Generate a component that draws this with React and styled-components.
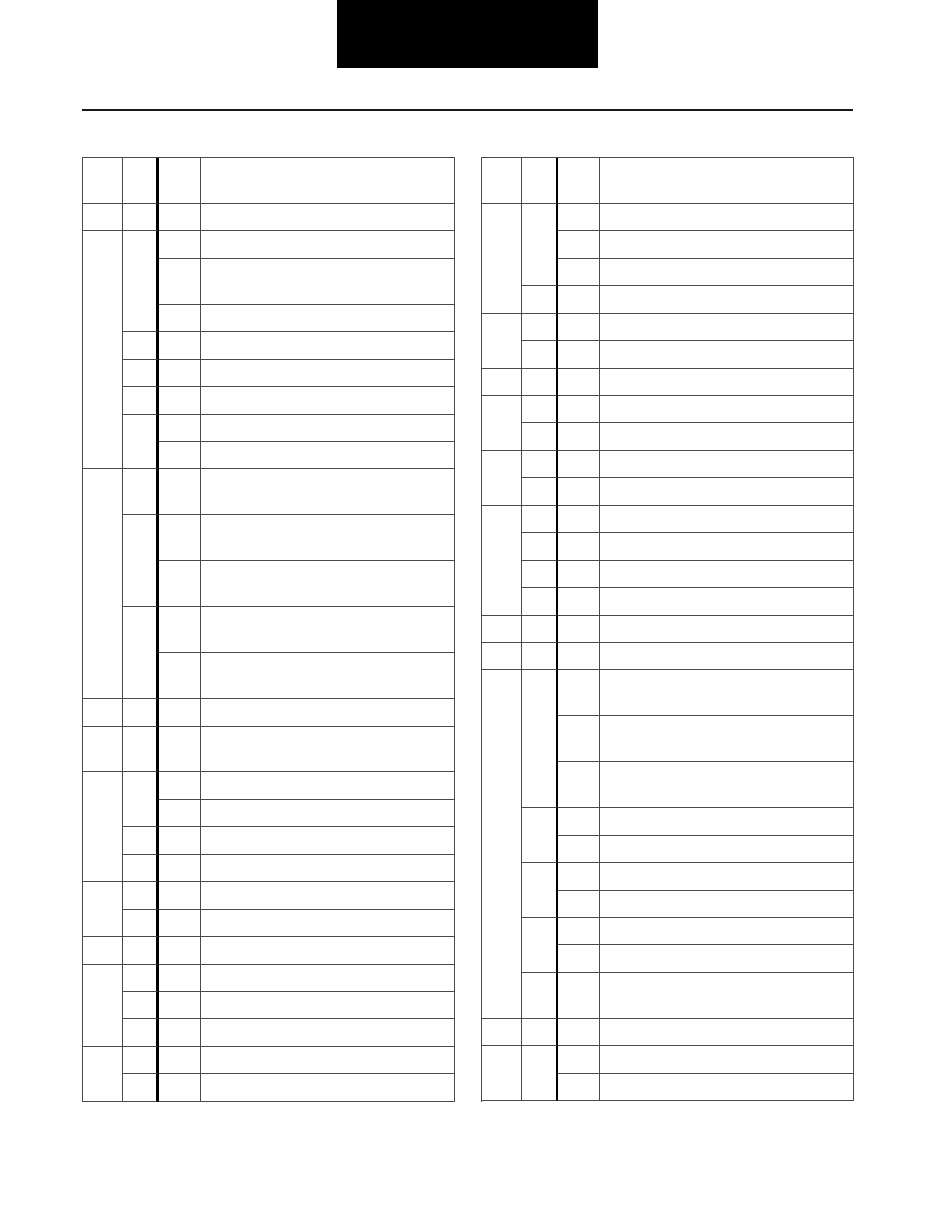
import React from 'react';
import styled, { createGlobalStyle } from 'styled-components';

const GlobalStyle = createGlobalStyle`
  html, body {
    margin: 0;
    padding: 0;
    background: #ffffff;
    font-family: "Liberation Sans", Arial, sans-serif;
  }
  * { box-sizing: border-box; }
`;

const LINE = '#4a4a4a';
const SINGLE = 27.45;
const DOUBLE = 45.95;

const Page = styled.div`
  width: 933px;
  min-height: 1210px;
  background: #fff;
`;

const TitleBlock = styled.div`
  width: 261px;
  height: 68px;
  margin-left: 337px;
  background: #000;
`;

const Rule = styled.hr`
  border: none;
  height: 2px;
  background: #1a1a1a;
  margin: 41px 80px 0 82px;
`;

const Tables = styled.div`
  display: flex;
  gap: 26px;
  padding-left: 82px;
  margin-top: 46px;
`;

const Table = styled.div`
  width: ${(p) => p.$width}px;
  display: flex;
  flex-direction: column;
  border-top: 1px solid ${LINE};
  border-left: 1px solid ${LINE};
`;

const GroupRow = styled.div`
  display: flex;
`;

const ColA = styled.div`
  flex: 0 0 ${(p) => p.$w}px;
  border-right: 1px solid ${LINE};
  border-bottom: 1px solid ${LINE};
`;

const SubList = styled.div`
  flex: 1;
  display: flex;
  flex-direction: column;
`;

const SubRow = styled.div`
  display: flex;
`;

const ColB = styled.div`
  flex: 0 0 ${(p) => p.$w}px;
  border-right: ${(p) => p.$thick}px solid #000;
  border-bottom: 1px solid ${LINE};
`;

const LeafList = styled.div`
  flex: 1;
  display: flex;
  flex-direction: column;
`;

const Leaf = styled.div`
  display: flex;
  height: ${(p) => (p.$size === 'd' ? DOUBLE : SINGLE)}px;
`;

const ColC = styled.div`
  flex: 0 0 ${(p) => p.$w}px;
  border-right: 1px solid ${LINE};
  border-bottom: 1px solid ${LINE};
`;

const ColD = styled.div`
  flex: 1;
  border-right: 1px solid ${LINE};
  border-bottom: 1px solid ${LINE};
`;

const leftGroups = [
  [['d']],
  [['s']],
  [['s', 'd', 's'], ['s'], ['s'], ['s'], ['s', 's']],
  [['d'], ['d', 'd'], ['d', 'd']],
  [['s']],
  [['d']],
  [['s', 's'], ['s'], ['s']],
  [['s'], ['s']],
  [['s']],
  [['s'], ['s'], ['s']],
  [['s'], ['s']],
];

const rightGroups = [
  [['d']],
  [['s', 's', 's'], ['s']],
  [['s'], ['s']],
  [['s']],
  [['s'], ['s']],
  [['s'], ['s']],
  [['s'], ['s'], ['s'], ['s']],
  [['s']],
  [['s']],
  [['d', 'd', 'd'], ['s', 's'], ['s', 's'], ['s', 's'], ['d']],
  [['s']],
  [['s', 's']],
];

function GridTable({ groups, width, cols }) {
  return (
    <Table $width={width}>
      {groups.map((group, gi) => (
        <GroupRow key={gi}>
          <ColA $w={cols.a} />
          <SubList>
            {group.map((sub, si) => (
              <SubRow key={si}>
                <ColB $w={cols.b} $thick={cols.thick} />
                <LeafList>
                  {sub.map((size, li) => (
                    <Leaf key={li} $size={size}>
                      <ColC $w={cols.c} />
                      <ColD />
                    </Leaf>
                  ))}
                </LeafList>
              </SubRow>
            ))}
          </SubList>
        </GroupRow>
      ))}
    </Table>
  );
}

export default function App() {
  return (
    <Page>
      <GlobalStyle />
      <TitleBlock />
      <Rule />
      <Tables>
        <GridTable
          groups={leftGroups}
          width={373}
          cols={{ a: 40, b: 36, thick: 3, c: 42 }}
        />
        <GridTable
          groups={rightGroups}
          width={373}
          cols={{ a: 40, b: 36, thick: 2, c: 42 }}
        />
      </Tables>
    </Page>
  );
}
